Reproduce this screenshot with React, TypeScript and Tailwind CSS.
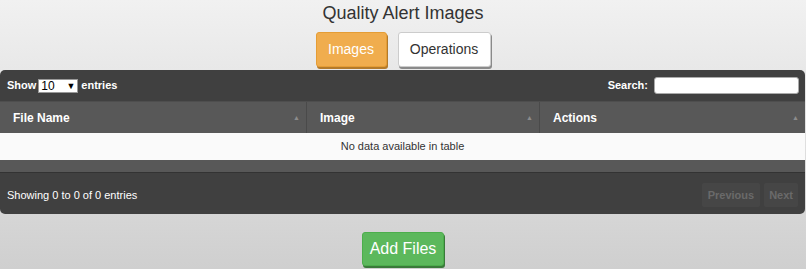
import React from 'react'

function SortIcon() {
  return <span className="text-[7px] leading-none text-[#8c8c8c]">▲</span>
}

export default function App() {
  const columns = [
    { name: 'File Name', width: 'w-[307px]' },
    { name: 'Image', width: 'w-[233px]' },
    { name: 'Actions', width: 'flex-1' },
  ]

  return (
    <div
      className="w-[806px] h-[269px] overflow-hidden bg-gradient-to-b from-[#f1f1f1] to-[#cfcfcf] text-[#333]"
      style={{ fontFamily: '"Liberation Sans", Arial, sans-serif' }}
    >
      {/* title */}
      <h1 className="text-center text-[18px] leading-[24px] pt-[1px]">Quality Alert Images</h1>

      {/* tabs */}
      <div className="flex justify-center gap-[11px] mt-[7px]">
        <button className="w-[71px] h-[35px] rounded-[3px] bg-[#f0ad4e] text-white text-[14px] border border-[#e59d35] shadow-[1px_2px_0_#b37a2b]">
          Images
        </button>
        <button className="w-[93px] h-[35px] rounded-[3px] bg-white text-[#333] text-[14px] border border-[#ccc] shadow-[1px_2px_0_#8a8a8a]">
          Operations
        </button>
      </div>

      {/* table panel */}
      <div className="mt-[3px] mr-[1px] rounded-[5px] bg-[#404040] overflow-hidden">
        <div className="h-[31px] flex items-center justify-between pl-[7px] pr-[6px] text-[11px] font-bold text-white">
          <div className="flex items-center gap-[2px]">
            <span>Show</span>
            <div className="w-[40px] h-[14px] bg-white text-black font-normal text-[12px] leading-[14px] flex items-center justify-between px-[2px] border border-[#999]">
              <span>10</span>
              <span className="text-[9px]">▼</span>
            </div>
            <span className="ml-[1px]">entries</span>
          </div>
          <div className="flex items-center gap-[6px]">
            <span>Search:</span>
            <div className="w-[145px] h-[17px] bg-white rounded-[3px] border border-[#aaa]" />
          </div>
        </div>

        <div className="h-[32px] flex bg-[#585858] border-t border-[#4e4e4e]">
          {columns.map((c, i) => (
            <div
              key={c.name}
              className={`${c.width} flex items-center justify-between pl-[13px] pr-[6px] text-[12px] font-bold text-white ${i < 2 ? 'border-r border-[#4a4a4a]' : ''}`}
            >
              <span>{c.name}</span>
              <SortIcon />
            </div>
          ))}
        </div>

        <div className="h-[27px] bg-[#fafafa] flex items-center justify-center text-[11px] text-[#333]">
          No data available in table
        </div>

        <div className="h-[13px] bg-[#585858] border-b border-[#333]" />

        <div className="h-[41px] flex items-center justify-between pt-[3px] pl-[7px] pr-[7px] text-[11px] text-white">
          <span>Showing 0 to 0 of 0 entries</span>
          <div className="flex gap-[4px] font-bold text-[11px] text-[#6a6a6a]">
            <span className="h-[24px] px-[6px] flex items-center bg-[#464646] rounded-[2px]">Previous</span>
            <span className="h-[24px] px-[5px] flex items-center bg-[#464646] rounded-[2px]">Next</span>
          </div>
        </div>
      </div>

      <div className="flex justify-center mt-[18px]">
        <button className="w-[82px] h-[34px] rounded-[3px] bg-[#5cb85c] text-white text-[16px] border border-[#4cae4c] shadow-[1px_2px_0_#3a7a3a]">
          Add Files
        </button>
      </div>
    </div>
  )
}
